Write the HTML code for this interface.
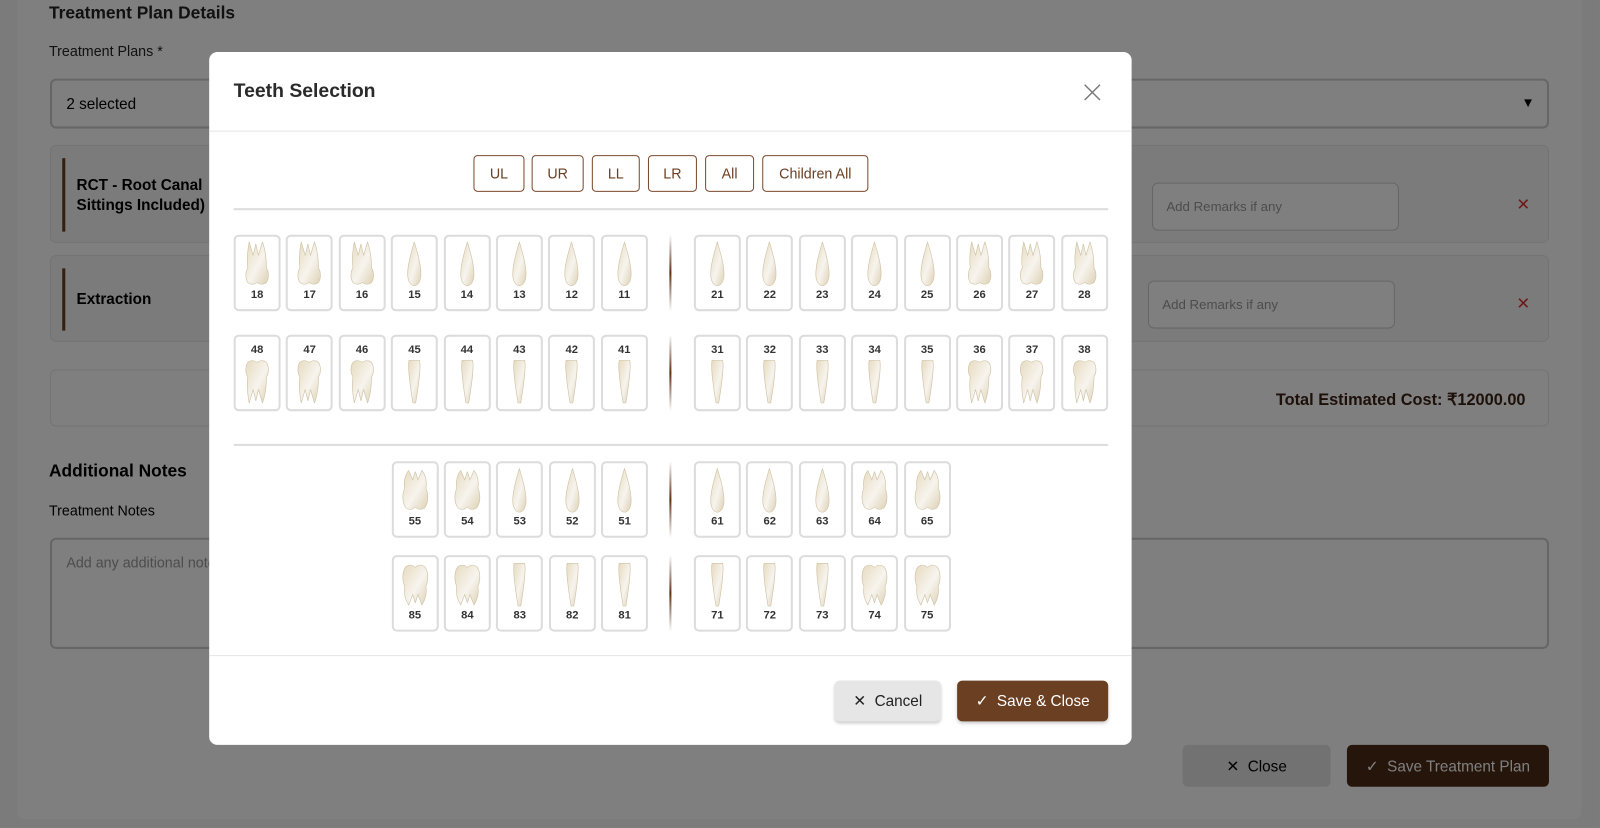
<!DOCTYPE html>
<html><head><meta charset="utf-8"><style>
*{box-sizing:border-box;margin:0;padding:0}
html,body{width:1600px;height:828px;overflow:hidden;background:#7b7b7b;font-family:"Liberation Sans",sans-serif}
#w{position:absolute;left:0;top:0;width:1568px;height:811px;transform:scale(1.0204);transform-origin:0 0}
.abs{position:absolute}
#page{left:17px;top:-10px;width:1533px;height:813px;background:#fff;border-radius:8px}
#ov{position:absolute;left:0;top:0;width:1568px;height:811px;background:rgba(0,0,0,.5)}
#under-bg{position:absolute;left:0;top:0;width:1568px;height:811px;background:#f6f6f6}
.box{border:2px solid #ccc;border-radius:6px;background:#fff}
.panel{background:#f7f7f7;border:1px solid #e6e6e6;border-radius:6px}
#modal{left:205px;top:51px;width:904px;height:679px;background:#fff;border-radius:8px}
.hb{position:absolute;top:152px;height:36px;border:1px solid #7a4a2e;border-radius:4px;color:#6b3f22;font-size:14px;display:flex;align-items:center;justify-content:center;background:#fff}
.row{position:absolute;display:flex;gap:5.4px}
.c{width:46px;height:75px;border:2px solid #dcdcdc;border-radius:5px;display:flex;flex-direction:column;align-items:center;font-size:11px;font-weight:bold;color:#333;background:#fff}
.c svg{width:26px;height:45px}
.u svg{margin-top:4px}.u b{margin-top:2px}
.l b{margin-top:7px}.l svg{margin-top:2px}
.dv{position:absolute;width:2px;height:75px;background:linear-gradient(#fff,#5a3018 50%,#fff)}
.sep{position:absolute;left:229px;width:857px;height:2px;background:#ddd}
</style></head><body>
<svg width="0" height="0" style="position:absolute"><defs>
<linearGradient id="g" x1="0" y1="0" x2="1" y2="1"><stop offset="0" stop-color="#e6dbc0"/><stop offset=".55" stop-color="#f7f4ee"/><stop offset="1" stop-color="#ddd1b4"/></linearGradient>
<symbol id="um" viewBox="0 0 20 44" preserveAspectRatio="none"><path d="M3 26C2 18 3 8 4 1L7 14 9 3 11 14 14 1C16 8 17 18 17 26 19 30 19 36 17 40 14 43 11 41 10 40 9 41 6 43 3 40 1 36 1 30 3 26Z" fill="url(#g)" stroke="#d0c3a6" stroke-width=".5"/></symbol>
<symbol id="us" viewBox="0 0 20 44" preserveAspectRatio="none"><path d="M10 1C8 10 5 22 5 32 5 38 7 43 10 43 13 43 15 38 15 32 15 22 12 10 10 1Z" fill="url(#g)" stroke="#d0c3a6" stroke-width=".5"/></symbol>
<symbol id="lm" viewBox="0 0 20 44" preserveAspectRatio="none"><path d="M3 18C2 26 3 36 4 43L7 30 9 41 11 30 14 43C16 36 17 26 17 18 19 14 19 8 17 4 14 1 11 3 10 4 9 3 6 1 3 4 1 8 1 14 3 18Z" fill="url(#g)" stroke="#d0c3a6" stroke-width=".5"/></symbol>
<symbol id="ls" viewBox="0 0 20 44" preserveAspectRatio="none"><path d="M6 2L14 2C15 8 14 20 11 43L9 43C6 20 5 8 6 2Z" fill="url(#g)" stroke="#d0c3a6" stroke-width=".5"/></symbol>
<symbol id="cm" viewBox="0 0 20 44" preserveAspectRatio="none"><path d="M2 20C1 12 3 6 5 3L8 12 10 4 12 12 15 3C17 6 19 12 18 20 20 26 20 34 17 39 13 42 11 39 10 38 9 39 7 42 3 39 0 34 0 26 2 20Z" fill="url(#g)" stroke="#d0c3a6" stroke-width=".5"/></symbol>
<symbol id="clm" viewBox="0 0 20 44" preserveAspectRatio="none"><path d="M2 24C1 32 3 38 5 42L8 32 10 40 12 32 15 42C17 38 19 32 18 24 20 18 20 10 17 5 13 2 11 5 10 6 9 5 7 2 3 5 0 10 0 18 2 24Z" fill="url(#g)" stroke="#d0c3a6" stroke-width=".5"/></symbol>
</defs></svg>
<div id="w">
<div id="under-bg"></div>
<div class="abs" id="page"></div>
<div class="abs" style="left:48px;top:3px;font-size:17px;font-weight:bold;color:#222">Treatment Plan Details</div>
<div class="abs" style="left:48px;top:42px;font-size:14px;color:#222">Treatment Plans *</div>
<div class="abs box" style="left:49px;top:77px;width:1469px;height:49px"><span class="abs" style="left:14px;top:15px;font-size:15px">2 selected</span><span class="abs" style="right:12px;top:14px;font-size:13px">▼</span></div>
<div class="abs panel" style="left:49px;top:142px;width:1469px;height:96px"><div class="abs" style="left:11px;top:12px;width:3px;height:72px;background:#6b3f22"></div><div class="abs" style="left:25px;top:29px;font-size:15px;font-weight:bold;line-height:20px">RCT - Root Canal<br>Sittings Included)</div><div class="abs box" style="left:1079px;top:36px;width:242px;height:47px;border-width:1px"><span class="abs" style="left:13px;top:15px;font-size:13px;color:#999">Add Remarks if any</span></div><span class="abs" style="left:1436px;top:48px;color:#d33;font-size:16px">✕</span></div>
<div class="abs panel" style="left:49px;top:250px;width:1469px;height:85px"><div class="abs" style="left:11px;top:12px;width:3px;height:61px;background:#6b3f22"></div><div class="abs" style="left:25px;top:34px;font-size:15px;font-weight:bold">Extraction</div><div class="abs box" style="left:1075px;top:24px;width:242px;height:47px;border-width:1px"><span class="abs" style="left:13px;top:15px;font-size:13px;color:#999">Add Remarks if any</span></div><span class="abs" style="left:1436px;top:37px;color:#d33;font-size:16px">✕</span></div>
<div class="abs panel" style="left:49px;top:362px;width:1469px;height:56px;background:#fff"><div class="abs" style="right:22px;top:19px;font-size:16px;font-weight:bold;color:#3a2112">Total Estimated Cost: ₹12000.00</div></div>
<div class="abs" style="left:48px;top:452px;font-size:17px;font-weight:bold">Additional Notes</div>
<div class="abs" style="left:48px;top:492px;font-size:14px">Treatment Notes</div>
<div class="abs box" style="left:49px;top:527px;width:1469px;height:109px"><span class="abs" style="left:14px;top:14px;font-size:14px;color:#999">Add any additional notes</span></div>
<div class="abs" style="left:1159px;top:730px;width:145px;height:41px;background:#e4e4e4;border-radius:5px;font-size:15px;display:flex;align-items:center;justify-content:center">✕&nbsp; Close</div>
<div class="abs" style="left:1320px;top:730px;width:198px;height:41px;background:#4a2a16;border-radius:5px;font-size:15px;color:#fff;display:flex;align-items:center;justify-content:center">✓&nbsp; Save Treatment Plan</div>
<div id="ov"></div>

<div class="abs" id="modal"></div>
<div class="abs" style="left:229px;top:79px;font-size:19px;font-weight:bold;color:#2a2a2a">Teeth Selection</div>
<svg class="abs" style="left:1062px;top:82px" width="17" height="17" viewBox="0 0 17 17"><path d="M1 1L16 16M16 1L1 16" stroke="#777" stroke-width="1.4"/></svg>
<div class="abs" style="left:205px;top:128px;width:904px;height:1px;background:#e5e5e5"></div>
<div class="hb" style="left:464px;width:50px">UL</div>
<div class="hb" style="left:521px;width:51px">UR</div>
<div class="hb" style="left:580px;width:47px">LL</div>
<div class="hb" style="left:635px;width:48px">LR</div>
<div class="hb" style="left:691px;width:48px">All</div>
<div class="hb" style="left:747px;width:104px">Children All</div>
<div class="sep" style="top:204px"></div>

<div class="row" style="left:229px;top:230px">
<div class="c u"><svg><use href="#um"/></svg><b>18</b></div><div class="c u"><svg><use href="#um"/></svg><b>17</b></div><div class="c u"><svg><use href="#um"/></svg><b>16</b></div><div class="c u"><svg><use href="#us"/></svg><b>15</b></div><div class="c u"><svg><use href="#us"/></svg><b>14</b></div><div class="c u"><svg><use href="#us"/></svg><b>13</b></div><div class="c u"><svg><use href="#us"/></svg><b>12</b></div><div class="c u"><svg><use href="#us"/></svg><b>11</b></div></div>
<div class="dv" style="left:656px;top:230px"></div>
<div class="row" style="left:680px;top:230px">
<div class="c u"><svg><use href="#us"/></svg><b>21</b></div><div class="c u"><svg><use href="#us"/></svg><b>22</b></div><div class="c u"><svg><use href="#us"/></svg><b>23</b></div><div class="c u"><svg><use href="#us"/></svg><b>24</b></div><div class="c u"><svg><use href="#us"/></svg><b>25</b></div><div class="c u"><svg><use href="#um"/></svg><b>26</b></div><div class="c u"><svg><use href="#um"/></svg><b>27</b></div><div class="c u"><svg><use href="#um"/></svg><b>28</b></div></div>

<div class="row" style="left:229px;top:328px">
<div class="c l"><b>48</b><svg><use href="#lm"/></svg></div><div class="c l"><b>47</b><svg><use href="#lm"/></svg></div><div class="c l"><b>46</b><svg><use href="#lm"/></svg></div><div class="c l"><b>45</b><svg><use href="#ls"/></svg></div><div class="c l"><b>44</b><svg><use href="#ls"/></svg></div><div class="c l"><b>43</b><svg><use href="#ls"/></svg></div><div class="c l"><b>42</b><svg><use href="#ls"/></svg></div><div class="c l"><b>41</b><svg><use href="#ls"/></svg></div></div>
<div class="dv" style="left:656px;top:328px"></div>
<div class="row" style="left:680px;top:328px">
<div class="c l"><b>31</b><svg><use href="#ls"/></svg></div><div class="c l"><b>32</b><svg><use href="#ls"/></svg></div><div class="c l"><b>33</b><svg><use href="#ls"/></svg></div><div class="c l"><b>34</b><svg><use href="#ls"/></svg></div><div class="c l"><b>35</b><svg><use href="#ls"/></svg></div><div class="c l"><b>36</b><svg><use href="#lm"/></svg></div><div class="c l"><b>37</b><svg><use href="#lm"/></svg></div><div class="c l"><b>38</b><svg><use href="#lm"/></svg></div></div>

<div class="sep" style="top:435px"></div>

<div class="row" style="left:383.6px;top:452px">
<div class="c u"><svg><use href="#cm"/></svg><b>55</b></div><div class="c u"><svg><use href="#cm"/></svg><b>54</b></div><div class="c u"><svg><use href="#us"/></svg><b>53</b></div><div class="c u"><svg><use href="#us"/></svg><b>52</b></div><div class="c u"><svg><use href="#us"/></svg><b>51</b></div></div>
<div class="dv" style="left:656px;top:452px"></div>
<div class="row" style="left:680px;top:452px">
<div class="c u"><svg><use href="#us"/></svg><b>61</b></div><div class="c u"><svg><use href="#us"/></svg><b>62</b></div><div class="c u"><svg><use href="#us"/></svg><b>63</b></div><div class="c u"><svg><use href="#cm"/></svg><b>64</b></div><div class="c u"><svg><use href="#cm"/></svg><b>65</b></div></div>

<div class="row" style="left:383.6px;top:544px">
<div class="c u"><svg><use href="#clm"/></svg><b>85</b></div><div class="c u"><svg><use href="#clm"/></svg><b>84</b></div><div class="c u"><svg><use href="#ls"/></svg><b>83</b></div><div class="c u"><svg><use href="#ls"/></svg><b>82</b></div><div class="c u"><svg><use href="#ls"/></svg><b>81</b></div></div>
<div class="dv" style="left:656px;top:544px"></div>
<div class="row" style="left:680px;top:544px">
<div class="c u"><svg><use href="#ls"/></svg><b>71</b></div><div class="c u"><svg><use href="#ls"/></svg><b>72</b></div><div class="c u"><svg><use href="#ls"/></svg><b>73</b></div><div class="c u"><svg><use href="#clm"/></svg><b>74</b></div><div class="c u"><svg><use href="#clm"/></svg><b>75</b></div></div>

<div class="abs" style="left:205px;top:642px;width:904px;height:1px;background:#e5e5e5"></div>
<div class="abs" style="left:818px;top:667px;width:104px;height:40px;background:#e6e6e6;border-radius:5px;box-shadow:0 2px 3px rgba(0,0,0,.2);font-size:15px;color:#222;display:flex;align-items:center;justify-content:center">✕&nbsp; Cancel</div>
<div class="abs" style="left:938px;top:667px;width:148px;height:40px;background:#6b3f22;border-radius:5px;box-shadow:0 2px 3px rgba(0,0,0,.2);font-size:15px;color:#fff;display:flex;align-items:center;justify-content:center">✓&nbsp; Save &amp; Close</div>
</div>
</body></html>
